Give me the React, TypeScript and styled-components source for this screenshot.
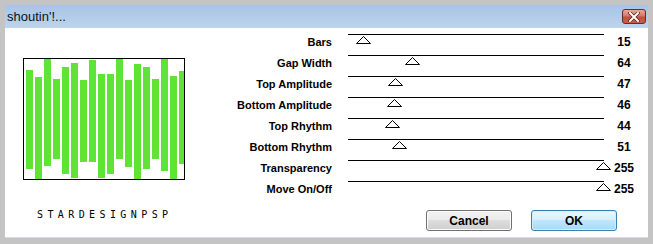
import styled, { createGlobalStyle } from "styled-components";

const GlobalStyle = createGlobalStyle`
  body {
    margin: 0;
    background: #c4c4c4;
  }
`;

const SLIDERS = [
  { label: "Bars", value: 15 },
  { label: "Gap Width", value: 64 },
  { label: "Top Amplitude", value: 47 },
  { label: "Bottom Amplitude", value: 46 },
  { label: "Top Rhythm", value: 44 },
  { label: "Bottom Rhythm", value: 51 },
  { label: "Transparency", value: 255 },
  { label: "Move On/Off", value: 255 },
];

// top / bottom of each bar inside the preview box
const BARS = [
  [12, 111], [19, 121], [1, 108], [21, 101], [9, 116], [5, 120],
  [22, 104], [2, 104], [16, 120], [16, 116], [1, 101], [22, 109],
  [6, 121], [9, 111], [21, 101], [1, 113], [18, 121], [13, 106],
];

function Preview() {
  return (
    <svg width="162" height="122" viewBox="0 0 162 122">
      {BARS.map(([top, bottom], i) => (
        <rect
          key={i}
          x={3 + i * 9}
          y={top}
          width={7}
          height={bottom - top}
          fill="#5fe335"
        />
      ))}
      <rect x="0.5" y="0.5" width="161" height="121" fill="none" stroke="#000" />
    </svg>
  );
}

function CloseIcon() {
  return (
    <svg width="12" height="10" viewBox="0 0 12 10">
      <path
        d="M2 1 L10 9 M10 1 L2 9"
        stroke="#5a2018"
        strokeWidth="3.4"
        strokeLinecap="square"
      />
      <path
        d="M2 1 L10 9 M10 1 L2 9"
        stroke="#fff"
        strokeWidth="2"
        strokeLinecap="square"
      />
    </svg>
  );
}

function App() {
  return (
    <>
      <GlobalStyle />
      <Window>
        <TitleBar>
          <Title>shoutin'!...</Title>
          <CloseButton>
            <CloseIcon />
          </CloseButton>
        </TitleBar>
        <Body>
          <LeftPanel>
            <Preview />
            <Logo>STARDESIGNPSP</Logo>
          </LeftPanel>
          <RightPanel>
            <Sliders>
              {SLIDERS.map((s) => (
                <Row key={s.label}>
                  <Label>{s.label}</Label>
                  <Track>
                    <Thumb style={{ left: s.value - 7 }}>
                      <svg width="15" height="8" viewBox="0 0 15 8">
                        <path d="M7.5 0.5 L14.5 7.5 L0.5 7.5 Z" fill="#fff" stroke="#000" />
                      </svg>
                    </Thumb>
                  </Track>
                  <Value>{s.value}</Value>
                </Row>
              ))}
            </Sliders>
            <Buttons>
              <Button>Cancel</Button>
              <Button $primary>OK</Button>
            </Buttons>
          </RightPanel>
        </Body>
      </Window>
    </>
  );
}

const Window = styled.div`
  width: 653px;
  height: 244px;
  box-sizing: border-box;
  padding: 5px 5px 6px 5px;
  display: flex;
  flex-direction: column;
  background: #c4c4c4;
`;

const TitleBar = styled.div`
  height: 23px;
  display: flex;
  align-items: center;
  justify-content: space-between;
  padding: 0 2px 0 2px;
  background: linear-gradient(#a8c4e5, #bdd4ed);
`;

const Title = styled.span`
  font-family: "Liberation Sans", Arial, sans-serif;
  font-size: 13px;
  color: #111;
`;

const CloseButton = styled.div`
  width: 24px;
  height: 15px;
  box-sizing: border-box;
  display: flex;
  align-items: center;
  justify-content: center;
  border: 1px solid #6b2a22;
  border-radius: 3px;
  background: linear-gradient(#e9a99a 0%, #d47a68 45%, #c2503a 55%, #c8604a 100%);
`;

const Body = styled.div`
  flex: 1;
  display: flex;
  background: #fff;
  border-bottom: 1px solid #dadcee;
`;

const LeftPanel = styled.div`
  width: 200px;
  padding: 30px 0 0 18px;
  box-sizing: border-box;
  display: flex;
  flex-direction: column;
`;

const Logo = styled.div`
  margin: 30px 0 0 14px;
  font-family: "DejaVu Sans Mono", monospace;
  font-size: 10px;
  letter-spacing: 4.4px;
  line-height: 10px;
  color: #000;
`;

const RightPanel = styled.div`
  flex: 1;
  display: flex;
  flex-direction: column;
  padding-top: 4px;
`;

const Sliders = styled.div`
  display: flex;
  flex-direction: column;
`;

const Row = styled.div`
  display: grid;
  grid-template-columns: 143px 256px 40px;
  height: 21px;
  font-family: "Liberation Sans", Arial, sans-serif;
  font-weight: bold;
  color: #000;
`;

const Label = styled.span`
  font-size: 11px;
  line-height: 21px;
  text-align: right;
  margin-right: 16px;
`;

const Track = styled.div`
  position: relative;
  margin-top: 2px;
  height: 19px;
  border-top: 1px solid #000;
`;

const Thumb = styled.div`
  position: absolute;
  top: 1px;
  width: 15px;
  height: 8px;
  line-height: 0;
`;

const Value = styled.span`
  font-size: 12px;
  line-height: 21px;
  text-align: center;
`;

const Buttons = styled.div`
  display: flex;
  justify-content: flex-end;
  gap: 19px;
  padding-right: 31px;
  margin-top: 10px;
`;

const Button = styled.div<{ $primary?: boolean }>`
  width: 86px;
  height: 21px;
  box-sizing: border-box;
  display: flex;
  align-items: center;
  justify-content: center;
  border-radius: 3px;
  font-family: "Liberation Sans", Arial, sans-serif;
  font-size: 12px;
  font-weight: bold;
  color: #000;
  border: 1px solid ${(p) => (p.$primary ? "#3c7fb1" : "#707070")};
  background: ${(p) =>
    p.$primary
      ? "linear-gradient(#eaf6fd 0%, #d9f0fc 45%, #bee6fd 50%, #a7d9f5 100%)"
      : "linear-gradient(#f2f2f2 0%, #ebebeb 45%, #dddddd 50%, #cfcfcf 100%)"};
  box-shadow: inset 0 0 0 1px ${(p) => (p.$primary ? "#d5ecfa" : "#fcfcfc")};
`;

export default App;
